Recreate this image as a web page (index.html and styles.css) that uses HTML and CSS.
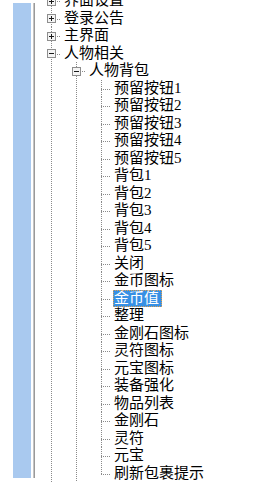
FILE: index.html
```html
<!DOCTYPE html>
<html lang="zh-CN">
<head>
<meta charset="utf-8">
<title>Tree</title>
<link rel="stylesheet" href="styles.css">
</head>
<body>
<div class="panel">
  <div class="gutter"></div>
  <div class="band"></div>
  <div class="gap"></div>
  <div class="rule"></div>
  <div class="tree">
    <ul class="list top">
      <li><div class="row"><span class="conn"><svg class="box" viewBox="0 0 9 9" width="9" height="9"><rect x=".5" y=".5" width="8" height="8" fill="#f4f4f4" stroke="#8e8e8e"/><path d="M2 4.5h5M4.5 2v5" stroke="#1a1a1a"/></svg></span><span class="label">界面设置</span></div></li>
      <li><div class="row"><span class="conn"><svg class="box" viewBox="0 0 9 9" width="9" height="9"><rect x=".5" y=".5" width="8" height="8" fill="#f4f4f4" stroke="#8e8e8e"/><path d="M2 4.5h5M4.5 2v5" stroke="#1a1a1a"/></svg></span><span class="label">登录公告</span></div></li>
      <li><div class="row"><span class="conn"><svg class="box" viewBox="0 0 9 9" width="9" height="9"><rect x=".5" y=".5" width="8" height="8" fill="#f4f4f4" stroke="#8e8e8e"/><path d="M2 4.5h5M4.5 2v5" stroke="#1a1a1a"/></svg></span><span class="label">主界面</span></div></li>
      <li>
        <div class="row"><span class="conn"><svg class="box" viewBox="0 0 9 9" width="9" height="9"><rect x=".5" y=".5" width="8" height="8" fill="#f4f4f4" stroke="#8e8e8e"/><path d="M2 4.5h5" stroke="#1a1a1a"/></svg></span><span class="label">人物相关</span></div>
        <ul class="list">
          <li>
            <div class="row"><span class="conn"><svg class="box" viewBox="0 0 9 9" width="9" height="9"><rect x=".5" y=".5" width="8" height="8" fill="#f4f4f4" stroke="#8e8e8e"/><path d="M2 4.5h5" stroke="#1a1a1a"/></svg></span><span class="label">人物背包</span></div>
            <ul class="list">
              <li><div class="row"><span class="conn"></span><span class="label">预留按钮1</span></div></li>
              <li><div class="row"><span class="conn"></span><span class="label">预留按钮2</span></div></li>
              <li><div class="row"><span class="conn"></span><span class="label">预留按钮3</span></div></li>
              <li><div class="row"><span class="conn"></span><span class="label">预留按钮4</span></div></li>
              <li><div class="row"><span class="conn"></span><span class="label">预留按钮5</span></div></li>
              <li><div class="row"><span class="conn"></span><span class="label">背包1</span></div></li>
              <li><div class="row"><span class="conn"></span><span class="label">背包2</span></div></li>
              <li><div class="row"><span class="conn"></span><span class="label">背包3</span></div></li>
              <li><div class="row"><span class="conn"></span><span class="label">背包4</span></div></li>
              <li><div class="row"><span class="conn"></span><span class="label">背包5</span></div></li>
              <li><div class="row"><span class="conn"></span><span class="label">关闭</span></div></li>
              <li><div class="row"><span class="conn"></span><span class="label">金币图标</span></div></li>
              <li><div class="row"><span class="conn"></span><span class="label sel">金币值</span></div></li>
              <li><div class="row"><span class="conn"></span><span class="label">整理</span></div></li>
              <li><div class="row"><span class="conn"></span><span class="label">金刚石图标</span></div></li>
              <li><div class="row"><span class="conn"></span><span class="label">灵符图标</span></div></li>
              <li><div class="row"><span class="conn"></span><span class="label">元宝图标</span></div></li>
              <li><div class="row"><span class="conn"></span><span class="label">装备强化</span></div></li>
              <li><div class="row"><span class="conn"></span><span class="label">物品列表</span></div></li>
              <li><div class="row"><span class="conn"></span><span class="label">金刚石</span></div></li>
              <li><div class="row"><span class="conn"></span><span class="label">灵符</span></div></li>
              <li><div class="row"><span class="conn"></span><span class="label">元宝</span></div></li>
              <li class="last"><div class="row"><span class="conn"></span><span class="label">刷新包裹提示</span></div></li>
            </ul>
          </li>
        </ul>
      </li>
    </ul>
  </div>
</div>
</body>
</html>
```

FILE: styles.css
```css
html, body {
  margin: 0;
  padding: 0;
  background: #ffffff;
}

.panel {
  display: flex;
  height: 483px;
  overflow: hidden;
}

.gutter {
  width: 13px;
  flex: none;
}

.band {
  width: 18px;
  flex: none;
  margin: 3px 0 5px;
  background: #a9c9ef;
}

.gap {
  width: 2px;
  flex: none;
}

.rule {
  width: 2px;
  flex: none;
  margin: 3px 0 5px;
  background: linear-gradient(to right, #c4c4c4 0 1px, #9a9a9a 1px 2px);
}

.tree {
  flex: 1;
  overflow: hidden;
  font-family: "Liberation Serif", "Noto Sans CJK SC", serif;
  font-size: 15px;
  color: #000;
}

.list {
  list-style: none;
  margin: 0;
  padding: 0;
}

.list .list {
  padding-left: 25px;
}

.top {
  margin-top: -8px;
}

.list li {
  background-image: repeating-linear-gradient(to bottom, #8a8a8a 0 1px, transparent 1px 2px);
  background-repeat: no-repeat;
  background-size: 1px 100%;
  background-position: 16px 0;
}

.list li.last {
  background-size: 1px 9px;
}

.row {
  display: flex;
  align-items: center;
  height: 17.5px;
  line-height: 17.5px;
  white-space: nowrap;
}

.conn {
  width: 29px;
  height: 100%;
  flex: none;
  display: flex;
  align-items: center;
  background-image: repeating-linear-gradient(to right, #8a8a8a 0 1px, transparent 1px 2px);
  background-repeat: no-repeat;
  background-size: 10px 1px;
  background-position: 16px 9px;
}

.box {
  display: block;
  margin-left: 12px;
  margin-top: 1px;
}

.label {
  display: block;
  padding: 0 1px;
  margin-left: -1px;
}

.sel {
  background: #3790e4;
  color: #ffffff;
  outline: 1px dotted #e0a050;
  outline-offset: -1px;
  padding: 0 3px 0 1px;
}
```
